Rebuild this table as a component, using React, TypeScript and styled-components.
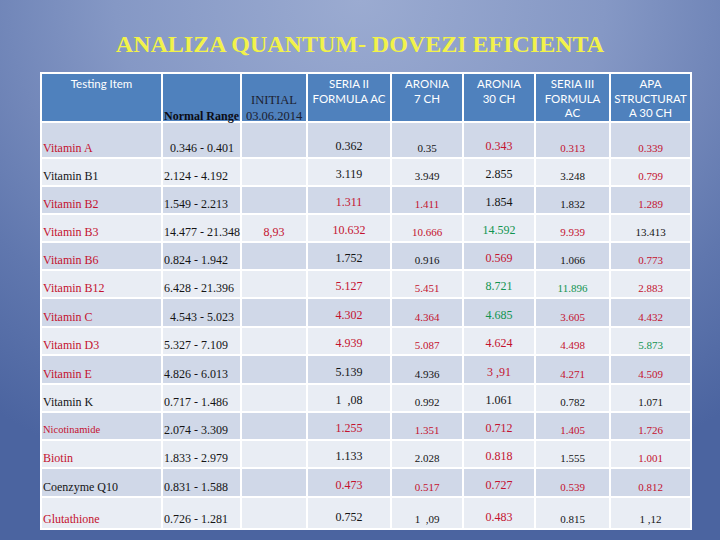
import styled, { createGlobalStyle } from "styled-components";

type Tone = "k" | "r" | "g";

interface Row {
  name: string;
  tone: Tone;
  range: string;
  indent?: number;
  small?: boolean;
  initial?: string;
  values: [string, Tone][];
}

const ROWS: Row[] = [
  { name: "Vitamin A", tone: "r", range: "0.346 - 0.401", indent: 6, values: [["0.362", "k"], ["0.35", "k"], ["0.343", "r"], ["0.313", "r"], ["0.339", "r"]] },
  { name: "Vitamin B1", tone: "k", range: "2.124 - 4.192", values: [["3.119", "k"], ["3.949", "k"], ["2.855", "k"], ["3.248", "k"], ["0.799", "r"]] },
  { name: "Vitamin B2", tone: "r", range: "1.549 - 2.213", values: [["1.311", "r"], ["1.411", "r"], ["1.854", "k"], ["1.832", "k"], ["1.289", "r"]] },
  { name: "Vitamin B3", tone: "r", range: "14.477 - 21.348", initial: "8,93", values: [["10.632", "r"], ["10.666", "r"], ["14.592", "g"], ["9.939", "r"], ["13.413", "k"]] },
  { name: "Vitamin B6", tone: "r", range: "0.824 - 1.942", values: [["1.752", "k"], ["0.916", "k"], ["0.569", "r"], ["1.066", "k"], ["0.773", "r"]] },
  { name: "Vitamin B12", tone: "r", range: "6.428 - 21.396", values: [["5.127", "r"], ["5.451", "r"], ["8.721", "g"], ["11.896", "g"], ["2.883", "r"]] },
  { name: "Vitamin C", tone: "r", range: "4.543 - 5.023", indent: 6, values: [["4.302", "r"], ["4.364", "r"], ["4.685", "g"], ["3.605", "r"], ["4.432", "r"]] },
  { name: "Vitamin D3", tone: "r", range: "5.327 - 7.109", values: [["4.939", "r"], ["5.087", "r"], ["4.624", "r"], ["4.498", "r"], ["5.873", "g"]] },
  { name: "Vitamin E", tone: "r", range: "4.826 - 6.013", values: [["5.139", "k"], ["4.936", "k"], ["3 ,91", "r"], ["4.271", "r"], ["4.509", "r"]] },
  { name: "Vitamin K", tone: "k", range: "0.717 - 1.486", values: [["1  ,08", "k"], ["0.992", "k"], ["1.061", "k"], ["0.782", "k"], ["1.071", "k"]] },
  { name: "Nicotinamide", tone: "r", small: true, range: "2.074 - 3.309", values: [["1.255", "r"], ["1.351", "r"], ["0.712", "r"], ["1.405", "r"], ["1.726", "r"]] },
  { name: "Biotin", tone: "r", range: "1.833 - 2.979", values: [["1.133", "k"], ["2.028", "k"], ["0.818", "r"], ["1.555", "k"], ["1.001", "r"]] },
  { name: "Coenzyme Q10", tone: "k", range: "0.831 - 1.588", values: [["0.473", "r"], ["0.517", "r"], ["0.727", "r"], ["0.539", "r"], ["0.812", "r"]] },
  { name: "Glutathione", tone: "r", range: "0.726 - 1.281", values: [["0.752", "k"], ["1  ,09", "k"], ["0.483", "r"], ["0.815", "k"], ["1 ,12", "k"]] },
];

const ROW_HEIGHTS = [34, 26, 26, 26, 26, 26, 27, 26, 27, 26, 26, 26, 27, 30];
const COL_WIDTHS = [119, 77, 64, 82, 70, 70, 73, 79];
// size / lift for the five result columns
const RESULT_COLS = [
  { size: 12, lift: 2 },
  { size: 11, lift: 0 },
  { size: 12, lift: 2 },
  { size: 11, lift: 0 },
  { size: 11, lift: 0 },
];

const TONES: Record<Tone, string> = { k: "#141414", r: "#c4122f", g: "#119450" };

const GlobalStyle = createGlobalStyle`
  html, body {
    margin: 0;
    padding: 0;
  }
  body {
    width: 720px;
    height: 540px;
    overflow: hidden;
  }
`;

const Slide = styled.div`
  width: 720px;
  height: 540px;
  box-sizing: border-box;
  padding-top: 30px;
  display: flex;
  flex-direction: column;
  background: radial-gradient(
    ellipse 85% 95% at 50% 0%,
    #9babd1 0%,
    #8598c5 40%,
    #6077ae 75%,
    #4b64a0 100%
  );
`;

const Title = styled.h1`
  margin: 0;
  font-family: "Liberation Serif", "Times New Roman", serif;
  font-weight: bold;
  font-size: 24px;
  line-height: 28px;
  color: #f2f24a;
  text-align: center;
`;

const Table = styled.table`
  margin: 14px 0 0 40px;
  width: 652px;
  table-layout: fixed;
  border-collapse: separate;
  border-spacing: 2px;
  background: #fff;
  font-family: "Liberation Serif", "Times New Roman", serif;
`;

const HeadRow = styled.tr`
  height: 47px;
`;

const HeadCell = styled.th`
  background: #4f81bd;
  color: #fff;
  font-family: Lato, "Liberation Sans", sans-serif;
  font-weight: normal;
  font-size: 11.5px;
  line-height: 14.5px;
  vertical-align: top;
  text-align: center;
  padding: 3px 1px 0;
`;

const RangeHead = styled(HeadCell)`
  font-family: "Liberation Serif", "Times New Roman", serif;
  font-weight: bold;
  font-size: 12px;
  line-height: 10px;
  color: #0c0c14;
  vertical-align: bottom;
  text-align: left;
  white-space: nowrap;
  padding: 0 0 0 1px;
`;

const InitialHead = styled(HeadCell)`
  font-family: "Liberation Serif", "Times New Roman", serif;
  font-size: 12.5px;
  line-height: 16px;
  color: #1c2030;
  vertical-align: bottom;
  padding: 0;
`;

const InitialText = styled.div`
  margin-bottom: -3px;
`;

const BodyRow = styled.tr<{ $alt: boolean; $h: number }>`
  height: ${(p) => p.$h}px;
  background: ${(p) => (p.$alt ? "#e9edf4" : "#d0d8e8")};
`;

const Cell = styled.td<{ $tone: Tone; $align?: string; $size?: number; $lift?: number; $indent?: number }>`
  color: ${(p) => TONES[p.$tone]};
  font-size: ${(p) => p.$size ?? 12}px;
  line-height: 14px;
  text-align: ${(p) => p.$align ?? "center"};
  vertical-align: bottom;
  white-space: pre;
  padding: 0 1px ${(p) => 2 + (p.$lift ?? 0)}px ${(p) => 1 + (p.$indent ?? 0)}px;
`;

export default function App() {
  return (
    <>
      <GlobalStyle />
      <Slide>
        <Title>ANALIZA QUANTUM- DOVEZI EFICIENTA</Title>
        <Table>
          <colgroup>
            {COL_WIDTHS.map((w, i) => (
              <col key={i} style={{ width: w }} />
            ))}
          </colgroup>
          <thead>
            <HeadRow>
              <HeadCell>Testing Item</HeadCell>
              <RangeHead>Normal Range</RangeHead>
              <InitialHead>
                <InitialText>
                  INITIAL
                  <br />
                  03.06.2014
                </InitialText>
              </InitialHead>
              <HeadCell>
                SERIA II
                <br />
                FORMULA AC
              </HeadCell>
              <HeadCell>
                ARONIA
                <br />7 CH
              </HeadCell>
              <HeadCell>
                ARONIA
                <br />
                30 CH
              </HeadCell>
              <HeadCell>
                SERIA III
                <br />
                FORMULA
                <br />
                AC
              </HeadCell>
              <HeadCell>
                APA
                <br />
                STRUCTURAT
                <br />A 30 CH
              </HeadCell>
            </HeadRow>
          </thead>
          <tbody>
            {ROWS.map((r, i) => (
              <BodyRow key={r.name} $alt={i % 2 === 1} $h={ROW_HEIGHTS[i]}>
                <Cell $tone={r.tone} $align="left" $size={r.small ? 10.5 : 12}>
                  {r.name}
                </Cell>
                <Cell $tone="k" $align="left" $indent={r.indent}>
                  {r.range}
                </Cell>
                <Cell $tone="r">{r.initial ?? ""}</Cell>
                {r.values.map(([v, t], j) => (
                  <Cell key={j} $tone={t} $size={RESULT_COLS[j].size} $lift={RESULT_COLS[j].lift}>
                    {v}
                  </Cell>
                ))}
              </BodyRow>
            ))}
          </tbody>
        </Table>
      </Slide>
    </>
  );
}
